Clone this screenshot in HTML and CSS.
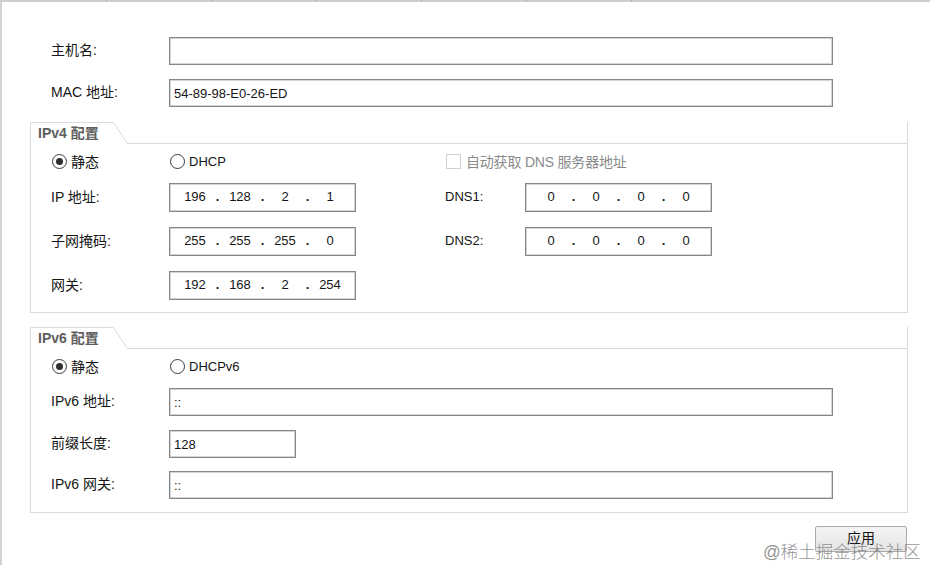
FILE: index.html
```html
<!DOCTYPE html>
<html lang="zh-CN">
<head>
    <meta charset="UTF-8">
    <meta name="viewport" content="width=device-width, initial-scale=1.0">
    <title>网络配置</title>
    <link rel="stylesheet" href="styles.css">
</head>
<body>
    <div class="window">
        <div class="topbar"><span></span><span></span><span></span><span></span><span></span><span></span></div>
        <div class="content">
            <div class="field-row">
                <label class="lbl" for="hostname">主机名:</label>
                <input type="text" id="hostname" class="input wide" value="">
            </div>
            <div class="field-row">
                <label class="lbl" for="mac">MAC 地址:</label>
                <input type="text" id="mac" class="input wide" value="54-89-98-E0-26-ED">
            </div>

            <section class="group">
                <div class="group-head">
                    <div class="tab">
                        <svg class="tab-shape" width="98" height="22" viewBox="0 0 98 22"><path d="M0.5 22 V0.5 H83.5 L97.5 21.5" fill="none" stroke="#dadada"/></svg>
                        <span class="tab-label">IPv4 配置</span>
                    </div>
                    <div class="head-fill"></div>
                </div>
                <div class="group-body">
                    <div class="row radios">
                        <div class="choice zh"><span class="radio checked"></span>静态</div>
                        <div class="choice"><span class="radio"></span>DHCP</div>
                        <div class="choice disabled span2"><span class="checkbox"></span>自动获取 DNS 服务器地址</div>
                    </div>
                    <div class="row ip-row">
                        <span class="lbl">IP 地址:</span>
                        <div class="ip"><span>196</span><i>.</i><span>128</span><i>.</i><span>2</span><i>.</i><span>1</span></div>
                        <span class="lbl dns">DNS1:</span>
                        <div class="ip"><span>0</span><i>.</i><span>0</span><i>.</i><span>0</span><i>.</i><span>0</span></div>
                    </div>
                    <div class="row ip-row">
                        <span class="lbl">子网掩码:</span>
                        <div class="ip"><span>255</span><i>.</i><span>255</span><i>.</i><span>255</span><i>.</i><span>0</span></div>
                        <span class="lbl dns">DNS2:</span>
                        <div class="ip"><span>0</span><i>.</i><span>0</span><i>.</i><span>0</span><i>.</i><span>0</span></div>
                    </div>
                    <div class="row ip-row last">
                        <span class="lbl">网关:</span>
                        <div class="ip"><span>192</span><i>.</i><span>168</span><i>.</i><span>2</span><i>.</i><span>254</span></div>
                    </div>
                </div>
            </section>

            <section class="group v6">
                <div class="group-head">
                    <div class="tab">
                        <svg class="tab-shape" width="98" height="22" viewBox="0 0 98 22"><path d="M0.5 22 V0.5 H83.5 L97.5 21.5" fill="none" stroke="#dadada"/></svg>
                        <span class="tab-label">IPv6 配置</span>
                    </div>
                    <div class="head-fill"></div>
                </div>
                <div class="group-body">
                    <div class="row radios">
                        <div class="choice zh"><span class="radio checked"></span>静态</div>
                        <div class="choice"><span class="radio"></span>DHCPv6</div>
                    </div>
                    <div class="row v6-row">
                        <span class="lbl">IPv6 地址:</span>
                        <input type="text" class="input long" value="::">
                    </div>
                    <div class="row v6-row">
                        <span class="lbl">前缀长度:</span>
                        <input type="text" class="input short" value="128">
                    </div>
                    <div class="row v6-row last">
                        <span class="lbl">IPv6 网关:</span>
                        <input type="text" class="input long" value="::">
                    </div>
                </div>
            </section>

            <div class="actions">
                <button type="button" class="btn">应用</button>
            </div>
        </div>
        <div class="watermark">@稀土掘金技术社区</div>
    </div>
</body>
</html>
```

FILE: styles.css
```css
body { margin: 0; background: #fff; font-family: "Liberation Sans", "Noto Sans CJK SC", sans-serif; font-size: 13px; color: #151515;}
.window { position: relative; width: 930px; height: 565px; box-sizing: border-box; border-left: 2px solid #d2d2d2; overflow: hidden;}
.topbar { display: flex; height: 2px; background: #cdcdcd;}
.topbar span { width: 104px; border-right: 1px solid #b4b4b4;}
.content { padding: 35px 0 0 28px;}

.lbl { white-space: nowrap; font-size: 14px; line-height: 18px; margin-top: -2px;}
.lbl.dns { font-size: 13px;}
.field-row { display: flex; align-items: center; height: 28px; margin-bottom: 14px; padding-left: 21px;}
.field-row .lbl { width: 118px; flex: none;}
.input { box-sizing: border-box; height: 28px; padding: 0 4px; border: 1px solid #868686; box-shadow: inset 0 0 0 1px #d4d4d4; font: inherit; color: #151515; background: #fff; outline: none;}
.input.wide { width: 664px;}
.input.long { width: 664px;}
.input.short { width: 127px;}

.group { width: 878px; margin-top: 15px;}
.group.v6 { margin-top: 14px;}
.group-head { display: flex; height: 22px;}
.tab { position: relative; width: 97px; height: 22px; flex: none;}
.tab-shape { position: absolute; left: 0; top: 0;}
.tab-label { position: relative; display: block; padding-left: 8px; line-height: 23px; font-size: 14px; font-weight: bold; color: #5e5e5e;}
.head-fill { flex: 1; border-bottom: 1px solid #dadada; border-right: 1px solid #dadada;}
.group-body { border: 1px solid #dadada; border-top: none; padding: 7px 0 12px 20px;}
.v6 .group-body { padding-bottom: 13px;}

.row { display: grid; grid-template-columns: 118px 276px 80px 188px; align-items: center;}
.radios { height: 20px; margin-bottom: 12px;}
.ip-row { height: 29px; margin-bottom: 15px;}
.v6-row { height: 28px; margin-bottom: 14px;}
.v6-row + .v6-row.last { margin-top: -1px;}
.row.last { margin-bottom: 0;}
.v6-row .input.long { grid-column: 2 / 5;}

.choice { display: flex; align-items: center; gap: 4px; padding-left: 1px;}
.choice.zh { font-size: 14px;}
.choice.span2 { grid-column: 3 / 5; gap: 5px; font-size: 14px; letter-spacing: -0.2px;}
.choice.disabled { color: #8a8a8a;}
.radio { display: flex; align-items: center; justify-content: center; width: 13px; height: 13px; border: 1px solid #3a3a3a; border-radius: 50%; flex: none;}
.radio.checked::after { content: ""; width: 7px; height: 7px; border-radius: 50%; background: #2e2e2e;}
.checkbox { width: 13px; height: 13px; border: 1px solid #cfcfcf; background: #fff; flex: none;}

.ip { display: flex; align-items: center; box-sizing: border-box; width: 187px; height: 29px; padding: 0 8px 2px; border: 1px solid #868686; box-shadow: inset 0 0 0 1px #d4d4d4;}
.ip span { width: 34px; text-align: center;}
.ip i { width: 11px; text-align: center; font-style: normal; font-weight: bold;}

.actions { display: flex; justify-content: flex-end; width: 877px; margin-top: 13px;}
.btn { width: 92px; height: 26px; border: 1px solid #acacac; border-radius: 2px; background: linear-gradient(#f4f4f4, #e4e4e4); font: inherit; font-size: 14px; line-height: 20px; color: #151515; padding: 0 0 3px;}

.watermark { position: absolute; left: 761px; top: 538px; font-size: 17.5px; font-weight: 300; color: rgba(110, 110, 110, 0.75); white-space: nowrap;}
```
